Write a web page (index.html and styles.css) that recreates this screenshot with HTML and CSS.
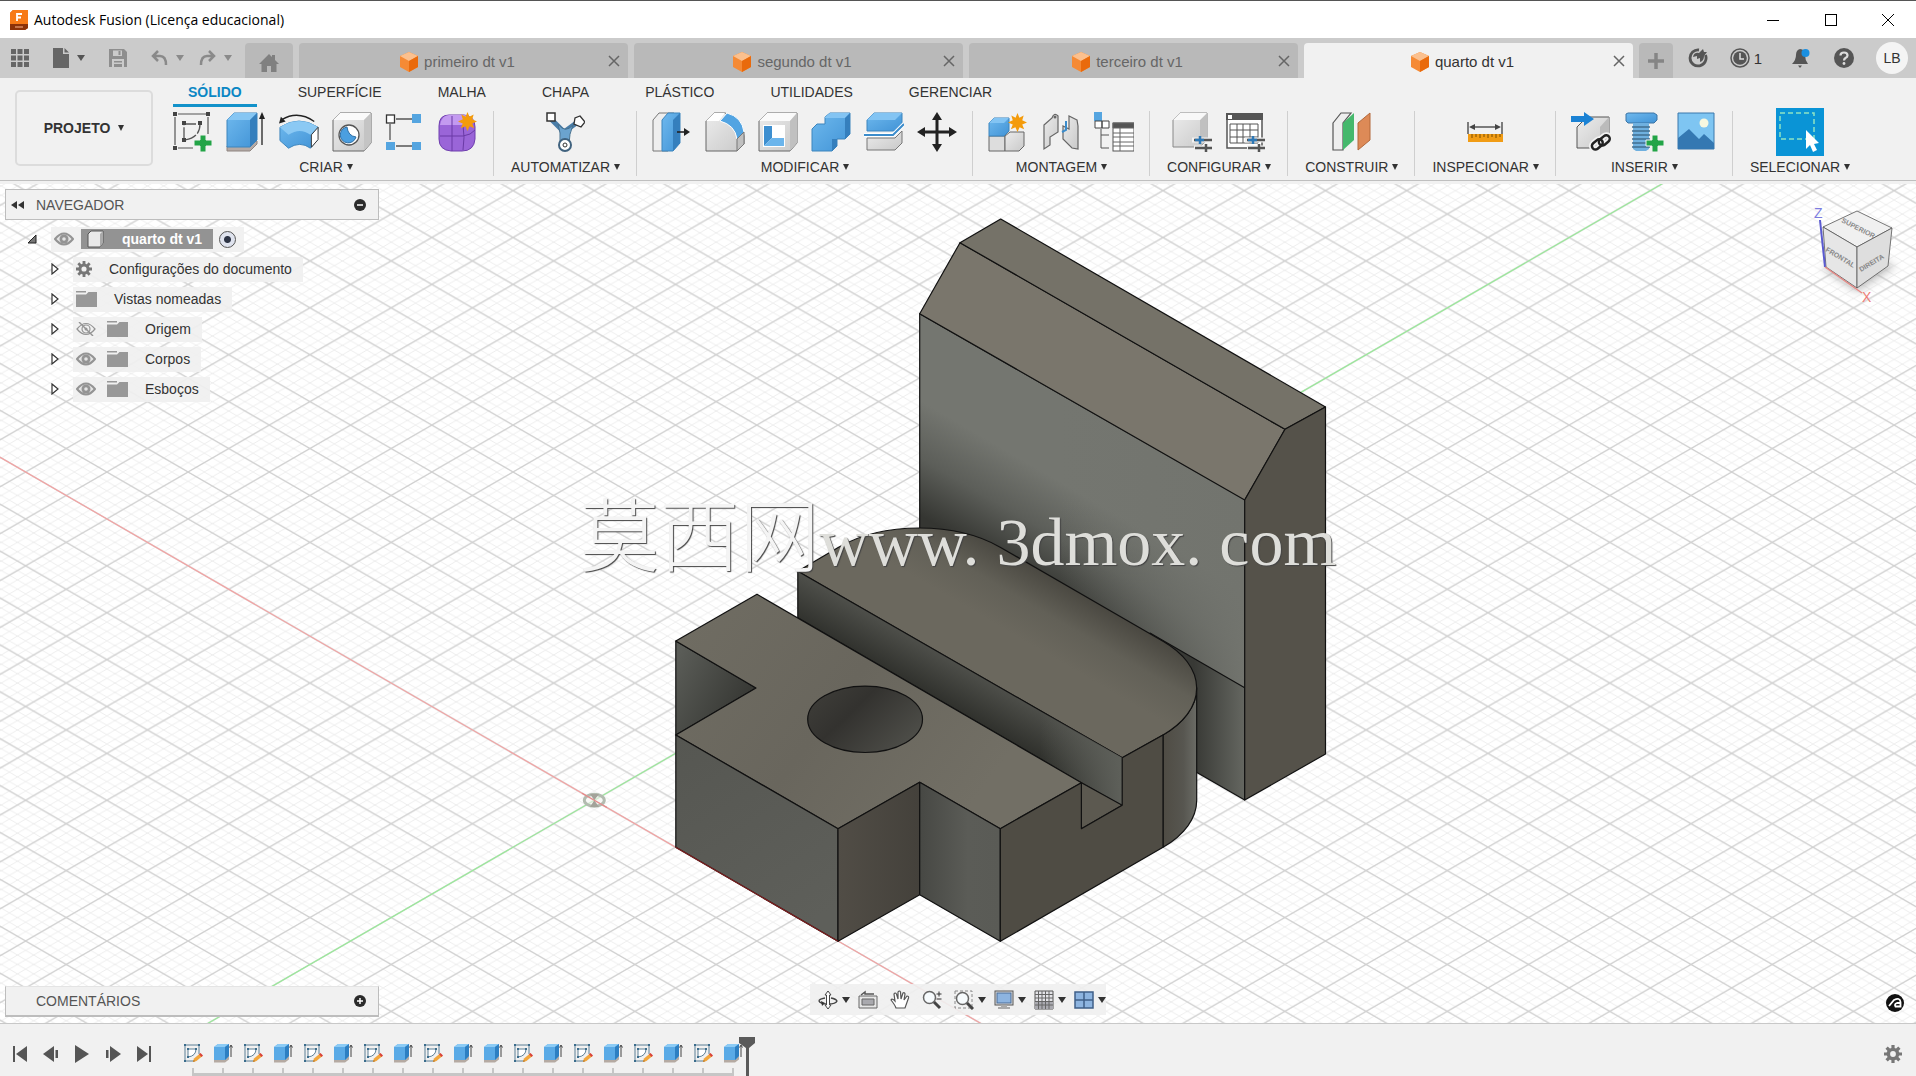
FILE: index.html
```html
<!DOCTYPE html>
<html lang="pt-BR">
<head>
    <meta charset="UTF-8">
    <meta name="viewport" content="width=device-width, initial-scale=1.0">
    <title>Autodesk Fusion (Licença educacional)</title>
    <link rel="stylesheet" href="styles.css">
</head>
<body>

<!-- Shared icons -->
<svg class="defs" width="0" height="0" aria-hidden="true">
    <symbol id="cube" viewBox="0 0 18 20">
        <path d="M9 0L18 4V15L9 20L0 15V4Z" fill="#f58a35"/>
        <path d="M9 0L18 4L9 9L0 4Z" fill="#fbc08e"/>
        <path d="M18 4V15L9 20V9Z" fill="#e96a0c"/>
    </symbol>
    <symbol id="close" viewBox="0 0 12 12">
        <path d="M1 1L11 11M11 1L1 11" stroke="#666" stroke-width="1.5" fill="none"/>
    </symbol>
    <symbol id="eye" viewBox="0 0 20 14">
        <path d="M1 7Q10 -4 19 7Q10 18 1 7Z" fill="#e4e4e4" stroke="#949494" stroke-width="2"/>
        <circle cx="10" cy="7" r="4.5" fill="#949494"/>
        <circle cx="10" cy="7" r="1.8" fill="#e4e4e4"/>
    </symbol>
    <symbol id="eye-off" viewBox="0 0 20 14">
        <path d="M1 7Q10 -4 19 7Q10 18 1 7Z" fill="none" stroke="#949494" stroke-width="1.2"/>
        <circle cx="10" cy="7" r="4" fill="none" stroke="#949494" stroke-width="1.2"/>
        <circle cx="10" cy="7" r="1.5" fill="#949494"/>
        <path d="M3 0L17 14" stroke="#949494" stroke-width="1.4"/>
    </symbol>
    <symbol id="folder" viewBox="0 0 21 16">
        <path d="M0 0H10V1.5H0ZM0 3.5H10L12.5 1H21V16H0Z" fill="#989898"/>
    </symbol>
    <symbol id="gear" viewBox="0 0 18 18">
        <circle cx="9" cy="9" r="4.6" fill="none" stroke="#777" stroke-width="3.4"/>
        <path d="M9 0V3.5M9 14.500V18M0 9H3.500M14.500 9H18M2.600 2.600L5 5M13 13L15.400 15.400M15.400 2.600L13 5M5 13L2.600 15.400" stroke="#777" stroke-width="3.200"/>
    </symbol>
    <symbol id="expand" viewBox="0 0 8 12">
        <path d="M1 1L7 6L1 11Z" fill="#fff" stroke="#333" stroke-width="1.2"/>
    </symbol>
    <symbol id="tl-sketch" viewBox="0 0 20 20">
        <path d="M2 2H16V11M2 2V18H11" fill="none" stroke="#5b7f95" stroke-width="1"/>
        <path d="M5 6H13Q13 13 5 14Z" fill="#fff" stroke="#5b7f95" stroke-width="1"/>
        <path d="M1 1h2v2h-2zM15 1h2v2h-2zM1 17h2v2h-2zM4 5h2v2h-2zM12 5h2v2h-2zM4 13h2v2h-2z" fill="#3a6c8c"/>
        <path d="M10 19L11 15.500L17 10.500L19.500 13L13.500 18Z" fill="#f2a63c"/>
        <path d="M16 11.300L17.500 10L20 12.500L18.500 13.900Z" fill="#d8423a"/>
        <path d="M10 19L10.700 16.700L12.300 18.300Z" fill="#b8792c"/>
    </symbol>
    <symbol id="tl-extrude" viewBox="0 0 20 20">
        <path d="M1 16V19.500H12L16 16.500V13Z" fill="#b5aaa2"/>
        <path d="M1 4L5 1H16V13L12 17H1Z" fill="#5aaae6"/>
        <path d="M1 4L5 1H16L12 4Z" fill="#8ccbf5"/>
        <path d="M12 4L16 1V13L12 17Z" fill="#2d7fc2"/>
        <path d="M18 3V14M16.500 4.500L18 2L19.500 4.500" stroke="#444" fill="none" stroke-width="1"/>
    </symbol>
    <linearGradient id="blue" x1="0" y1="0" x2="1" y2="1">
        <stop offset="0" stop-color="#6fb9ee"/>
        <stop offset="1" stop-color="#4193d6"/>
    </linearGradient>
    <linearGradient id="grey" x1="0" y1="0" x2="1" y2="1">
        <stop offset="0" stop-color="#ececec"/>
        <stop offset="1" stop-color="#c9c9c9"/>
    </linearGradient>
    <symbol id="burst" viewBox="-10 -10 20 20">
        <path d="M0 -10L2 -5L6.500 -7.500L5 -2.500L10 0L5 2.200L7 7L2.200 5L0 10L-2.200 5L-7 7L-5 2.200L-10 0L-5 -2.500L-6.500 -7.500L-2 -5Z" fill="#f49b0b"/>
    </symbol>
</svg>

<header class="titlebar">
    <svg class="app-icon" viewBox="0 0 18 20">
        <path d="M3 0H16L18 2V18L15 20H0V3Z" fill="#c64b09"/>
        <path d="M3 0H18V14H0V3Z" fill="#f77a17"/>
        <path d="M0 14H18V18L15 20H0Z" fill="#8c3208"/>
        <path d="M7 11V4H12M7 7.500H11" stroke="#fff" stroke-width="1.800" fill="none"/>
        <path d="M5 17H13" stroke="#d88a60" stroke-width="1.500"/>
    </svg>
    <span class="title">Autodesk Fusion (Licença educacional)</span>
    <div class="window-buttons">
        <button aria-label="Minimizar"><svg width="14" height="14"><path d="M1 7.500H13" stroke="#000"/></svg></button>
        <button aria-label="Maximizar"><svg width="14" height="14"><rect x="1.500" y="1.500" width="11" height="11" fill="none" stroke="#000"/></svg></button>
        <button aria-label="Fechar"><svg width="14" height="14"><path d="M1 1L13 13M13 1L1 13" stroke="#000"/></svg></button>
    </div>
</header>

<div class="tabbar">
    <div class="quick">
        <button aria-label="Painel de dados"><svg width="18" height="18" fill="#666"><path d="M0 0h5v5h-5zM6.500 0h5v5h-5zM13 0h5v5h-5zM0 6.500h5v5h-5zM6.500 6.500h5v5h-5zM13 6.500h5v5h-5zM0 13h5v5h-5zM6.500 13h5v5h-5zM13 13h5v5h-5z"/></svg></button>
        <button class="q-file" aria-label="Arquivo"><svg width="16" height="20"><path d="M0 0H10V6H16V20H0ZM11.500 0L16 4.500H11.500Z" fill="#666"/></svg><i class="caret"></i></button>
        <button class="q-save" aria-label="Salvar"><svg width="18" height="18"><path d="M0 0H15L18 3V18H0Z" fill="#8e8e8e"/><path d="M4 1.500H13V7H4ZM3 10H15V18H3Z" fill="#cbcbcb"/><path d="M9.500 2H11.500V6H9.500ZM5 12H13V13.500H5ZM5 15H13V18H5Z" fill="#8e8e8e"/></svg></button>
        <button class="q-undo dim" aria-label="Desfazer"><svg width="17" height="16"><path d="M7 1L2 6L7 11M2 6H9Q15 6 15 15" fill="none" stroke="#8a8a8a" stroke-width="2.500"/></svg><i class="caret"></i></button>
        <button class="q-redo dim" aria-label="Refazer"><svg width="17" height="16"><path d="M10 1L15 6L10 11M15 6H8Q2 6 2 15" fill="none" stroke="#8a8a8a" stroke-width="2.500"/></svg><i class="caret"></i></button>
    </div>
    <button class="home-tab" aria-label="Início"><svg width="20" height="18"><path d="M10 0L13 3V1H16V6L20 10H17.500V18H12V12H8V18H2.500V10H0Z" fill="#808080"/></svg></button>
    <div class="doc-tab"><span class="doc-name"><svg width="18" height="20"><use href="#cube"/></svg>primeiro dt v1</span><button aria-label="Fechar"><svg width="12" height="12"><use href="#close"/></svg></button></div>
    <div class="doc-tab"><span class="doc-name"><svg width="18" height="20"><use href="#cube"/></svg>segundo dt v1</span><button aria-label="Fechar"><svg width="12" height="12"><use href="#close"/></svg></button></div>
    <div class="doc-tab"><span class="doc-name"><svg width="18" height="20"><use href="#cube"/></svg>terceiro dt v1</span><button aria-label="Fechar"><svg width="12" height="12"><use href="#close"/></svg></button></div>
    <div class="doc-tab active"><span class="doc-name"><svg width="18" height="20"><use href="#cube"/></svg>quarto dt v1</span><button aria-label="Fechar"><svg width="12" height="12"><use href="#close"/></svg></button></div>
    <button class="new-tab" aria-label="Novo"><svg width="16" height="16"><path d="M8 0V16M0 8H16" stroke="#858585" stroke-width="3.500"/></svg></button>
    <div class="account">
        <button aria-label="Extensões"><svg width="20" height="20"><path d="M11 2A8 8 0 1 0 17.500 7" fill="none" stroke="#555" stroke-width="2.800"/><path d="M5 9Q6 4 11 5L15 1L16 4L19 4L16 8Q16 13 12 14L12 10L9 11L9 8Z" fill="#555"/></svg></button>
        <button class="jobs" aria-label="Status do trabalho"><svg width="20" height="20"><circle cx="10" cy="10" r="9" fill="none" stroke="#555" stroke-width="1.500"/><circle cx="10" cy="10" r="6.800" fill="#555"/><path d="M10 5V11H14" fill="none" stroke="#ddd" stroke-width="1.500"/></svg><span>1</span></button>
        <button class="bell" aria-label="Notificações"><svg width="20" height="20"><path d="M8 1Q13 1 13 7Q13 12 16 16H0Q4 12 4 7Q4 2 8 1ZM6 17.500H10L8 20Z" fill="#555"/><circle cx="13.500" cy="5" r="4" fill="#1a8fe0"/></svg></button>
        <button aria-label="Ajuda"><svg width="20" height="20"><circle cx="10" cy="10" r="10" fill="#555"/><path d="M6.500 7.500Q6.500 4.500 10 4.500Q13.500 4.500 13.500 7.500Q13.500 9 11.500 10Q10 11 10 12.500" fill="none" stroke="#ddd" stroke-width="2.200"/><circle cx="10" cy="15.500" r="1.400" fill="#ddd"/></svg></button>
        <button class="avatar">LB</button>
    </div>
</div>

<div class="ribbon">
    <button class="workspace">PROJETO<i class="caret"></i></button>
    <div class="ribbon-main">
        <nav class="ribbon-tabs">
            <a href="#" class="current">SÓLIDO</a>
            <a href="#">SUPERFÍCIE</a>
            <a href="#">MALHA</a>
            <a href="#">CHAPA</a>
            <a href="#">PLÁSTICO</a>
            <a href="#">UTILIDADES</a>
            <a href="#">GERENCIAR</a>
        </nav>
        <div class="groups">
            <div class="group">
                <div class="tools">
                    <svg viewBox="0 0 40 40"><path d="M5 2H33M35 5V22M2 5V33M5 36H20" fill="none" stroke="#555" stroke-width="1.200"/><path d="M11 12H27Q27 26 11 28Z" fill="none" stroke="#555" stroke-width="1.300" stroke-dasharray="12 2"/><path d="M0 0h4v4h-4zM33 0h4v4h-4zM0 34h4v4h-4zM9 9h4v4h-4zM25 9h4v4h-4zM9 26h4v4h-4z" fill="#444"/><path d="M27 23H33V28H39V34H33V40H27V34H21V28H27Z" fill="#22a447" stroke="#f1f1f1"/></svg>
                    <svg viewBox="0 0 40 40"><path d="M1 34V39H24L31 32V29Z" fill="#b4aaa6" stroke="#8e8480"/><path d="M1 8L8 1H31V28L24 35H1Z" fill="url(#blue)" stroke="#3c85bd"/><path d="M1 8L8 1H31L24 8Z" fill="#86c6f3"/><path d="M24 8L31 1V28L24 35Z" fill="#357fbd"/><path d="M36 5V33" stroke="#222" stroke-width="1.300"/><path d="M36 0L39 7H33Z" fill="#222"/></svg>
                    <svg viewBox="0 0 42 40"><path d="M1 15Q21 2 41 15L40 29L33 37Q22 29 10 37L1 29Z" fill="url(#blue)" stroke="#3c85bd"/><path d="M1 15Q21 2 41 15L33 23Q22 15 10 23Z" fill="#8bc9f4"/><path d="M34 23L41 15V28L34 36Z" fill="#fff" stroke="#333"/><path d="M3 7Q20 -3 37 9" fill="none" stroke="#222" stroke-width="1.400"/><path d="M0 11L2 4L7 9Z" fill="#222"/></svg>
                    <svg viewBox="0 0 40 40"><path d="M1 8L8 1H39V31L32 39H1Z" fill="url(#grey)" stroke="#666"/><path d="M1 8L8 1H39L32 8Z" fill="#fafafa"/><path d="M32 8L39 1V31L32 39Z" fill="#c4c4c4"/><circle cx="17" cy="23" r="10" fill="#fff" stroke="#555" stroke-width="1.300"/><path d="M15 15A8 8 0 1 0 24 25Q16 24 15 15Z" fill="#4b9fe0" stroke="#2f6fa5"/></svg>
                    <svg viewBox="0 0 40 40"><path d="M11 7H27M5 12V28M11 34H27" stroke="#555" stroke-width="1.300"/><rect x="1.500" y="3" width="8" height="8" fill="#fff" stroke="#333" stroke-width="1.300"/><path d="M27 2H36V11H27ZM1 30H10V38H1ZM27 30H36V38H27Z" fill="#55a5e0"/></svg>
                    <svg viewBox="0 0 40 40"><path d="M1 14Q1 3 11 3H26Q37 4 37 15V27Q36 39 24 39H13Q1 38 1 27Z" fill="#9a65d8" stroke="#6f3fae"/><path d="M2 13Q4 3 11 3H26Q34 4 35 8Q27 13 23 13Z" fill="#c39af0"/><path d="M2 24H25Q33 23 37 18M14 4V39M25 13Q27 25 25 38" fill="none" stroke="#6a3aa6"/><use href="#burst" x="20" y="0" width="19" height="19"/></svg>
                </div>
                <button class="group-label">CRIAR<i class="caret"></i></button>
            </div>
            <div class="group">
                <div class="tools">
                    <svg viewBox="0 0 40 40"><path d="M6 7L19 20L34 9M19 19L20 33" fill="none" stroke="#4a7da8" stroke-width="5"/><path d="M13 12Q20 22 28 13Q24 22 24 32H15Q16 20 13 12Z" fill="#6ba3ce" stroke="#47718f"/><rect x="2" y="1" width="8" height="8" fill="#fff" stroke="#333" stroke-width="1.500"/><path d="M35 4L40 10L36 15L29 12L30 6Z" fill="#fff" stroke="#333" stroke-width="1.300"/><circle cx="20" cy="33" r="6" fill="#fff" stroke="#40627e" stroke-width="2"/><circle cx="20" cy="33" r="2" fill="#fff" stroke="#333"/></svg>
                </div>
                <button class="group-label">AUTOMATIZAR<i class="caret"></i></button>
            </div>
            <div class="group">
                <div class="tools">
                    <svg viewBox="0 0 40 40"><path d="M1 8L7 1H22V33L16 39H1Z" fill="#eee" stroke="#777"/><path d="M10 8L16 1H28V31L21 39H10Z" fill="url(#blue)" stroke="#3c85bd"/><path d="M21 8L28 1V31L21 39Z" fill="#357fbd"/><path d="M25 20H34" stroke="#222" stroke-width="1.600"/><path d="M32 16L38 20L32 24Z" fill="#222"/></svg>
                    <svg viewBox="0 0 40 40"><path d="M1 9L9 1H20Q37 4 39 24V32L32 39H1Z" fill="url(#grey)" stroke="#666"/><path d="M1 9L9 1H20L14 9Z" fill="#fff"/><path d="M15 9L22 1Q37 5 39 20L32 27Q30 13 15 9Z" fill="#52a4e2" stroke="#fff"/><path d="M32 27L39 20V32L32 39Z" fill="#c0c0c0" stroke="#777"/></svg>
                    <svg viewBox="0 0 40 40"><path d="M1 9L9 1H39V31L32 39H1Z" fill="url(#grey)" stroke="#666"/><path d="M1 9L9 1H39L32 9Z" fill="#fafafa"/><path d="M32 9L39 1V31L32 39Z" fill="#c0c0c0"/><rect x="5" y="13" width="22" height="22" fill="#fff"/><path d="M6 14H14V26L6 34Z" fill="#3d8fd0"/><path d="M6 34L14 26H26V34Z" fill="#6bb5ec"/></svg>
                    <svg viewBox="0 0 40 40"><path d="M1 17L6 12H14V5L19 1H39V22L34 27H26V34L21 39H1Z" fill="url(#blue)" stroke="#3c85bd"/><path d="M14 5L19 1H39L34 6H14Z" fill="#83c4f3"/><path d="M34 6L39 1V22L34 27ZM21 34V27H26V34L21 39Z" fill="#357fbd"/></svg>
                    <svg viewBox="0 0 40 40"><path d="M3 8L10 1H38V12L31 19H3Z" fill="url(#blue)" stroke="#3c85bd"/><path d="M3 8L10 1H38L31 8Z" fill="#83c4f3"/><path d="M3 26H31L38 19V31L31 38H3Z" fill="url(#grey)" stroke="#777"/><path d="M0 23H29L40 12" fill="none" stroke="#fff" stroke-width="4"/><path d="M0 23H29L40 12" fill="none" stroke="#3b8ccb" stroke-width="2"/></svg>
                    <svg viewBox="0 0 40 40"><path d="M20 5V35M5 20H35" stroke="#222" stroke-width="3"/><path d="M20 0L25 8H15ZM20 40L15 32H25ZM0 20L8 15V25ZM40 20L32 25V15Z" fill="#222"/></svg>
                </div>
                <button class="group-label">MODIFICAR<i class="caret"></i></button>
            </div>
            <div class="group">
                <div class="tools">
                    <svg viewBox="0 0 40 40"><path d="M1 24H17V39H1Z" fill="#ddd" stroke="#666"/><path d="M17 24L22 20H36V34L31 39H17Z" fill="url(#grey)" stroke="#666"/><path d="M1 11L6 6H21V19L16 24H1Z" fill="url(#blue)" stroke="#3c85bd"/><path d="M1 11L6 6H21L16 11Z" fill="#83c4f3"/><use href="#burst" x="20" y="1" width="19" height="19"/></svg>
                    <svg viewBox="0 0 40 40"><path d="M3 13L11 6Q13 0 17 4V20L9 25V33L3 37Z" fill="url(#grey)" stroke="#666" stroke-width="1.200"/><path d="M36 8L28 4V17L22 14V27L31 36L37 37V14Z" fill="url(#grey)" stroke="#666" stroke-width="1.200"/><path d="M25 9V18L21 20" fill="none" stroke="#3b8ccb" stroke-width="2"/><circle cx="14" cy="5" r="1.500" fill="#666"/></svg>
                    <svg viewBox="0 0 40 40"><path d="M0 0H8V9H0Z" fill="#55a5e0"/><path d="M1 9H8V16H1ZM8 9H15V16H8Z" fill="#fff" stroke="#444"/><path d="M7 17V36M7 23H15M7 36H15" stroke="#555"/><rect x="19" y="11" width="21" height="28" fill="#fff" stroke="#555"/><path d="M19 11H40V16H19ZM26 16V39" fill="#555" stroke="#666"/><path d="M19 21H40M19 25H40M19 30H40M19 34H40" stroke="#666"/></svg>
                </div>
                <button class="group-label">MONTAGEM<i class="caret"></i></button>
            </div>
            <div class="group">
                <div class="tools">
                    <svg viewBox="0 0 40 40"><path d="M1 8L8 1H35V28L28 35H1Z" fill="url(#grey)" stroke="#888"/><path d="M28 8L35 1V28L28 35Z" fill="#c0c0c0"/><path d="M1 8L8 1H35L28 8Z" fill="#f8f8f8"/><path d="M20 28H40M22 36H40" stroke="#f1f1f1" stroke-width="5"/><path d="M22 28H40M23 36H40M34 32V40" stroke="#555" stroke-width="2.500"/><path d="M28 24V32M23 28H32" stroke="#2e78b5" stroke-width="2.500"/></svg>
                    <svg viewBox="0 0 40 40"><rect x="2" y="2" width="35" height="34" fill="#fff" stroke="#555" stroke-width="1.500"/><path d="M1 1H38V8H1Z" fill="#555"/><rect x="3" y="3" width="4" height="4" fill="#fff"/><path d="M5 12H33V31H5ZM5 18H33M5 25H33M12 12V31M18 12V31M25 12V31" fill="none" stroke="#555"/><path d="M20 28H40M22 36H40" stroke="#f1f1f1" stroke-width="5"/><path d="M22 28H40M23 36H40M34 32V40" stroke="#555" stroke-width="2.500"/><path d="M28 24V32M23 28H32" stroke="#2e78b5" stroke-width="2.500"/></svg>
                </div>
                <button class="group-label">CONFIGURAR<i class="caret"></i></button>
            </div>
            <div class="group">
                <div class="tools">
                    <svg viewBox="0 0 40 40"><path d="M2 11L10 1H20L12 11V38H2Z" fill="#eee" stroke="#555" stroke-width="1.200"/><path d="M12 11L23 1V28L12 38Z" fill="#45b86c"/><path d="M27 11L39 1V28L27 38Z" fill="#dd8a57" stroke="#b3683b"/></svg>
                </div>
                <button class="group-label">CONSTRUIR<i class="caret"></i></button>
            </div>
            <div class="group">
                <div class="tools">
                    <svg viewBox="0 0 40 40"><path d="M3 10V22M37 10V22M6 15H34" stroke="#555" stroke-width="1.500"/><path d="M4 15L10 12V18ZM36 15L30 12V18Z" fill="#444"/><path d="M3 22H38V30H3Z" fill="#f19c15"/><path d="M7 22V26M11 22V25M15 22V26M19 22V25M23 22V26M27 22V25M31 22V26M35 22V25" stroke="#7a4c00"/></svg>
                </div>
                <button class="group-label">INSPECIONAR<i class="caret"></i></button>
            </div>
            <div class="group">
                <div class="tools">
                    <svg viewBox="0 0 40 40"><path d="M6 15L16 5H38V27L29 36H6Z" fill="url(#grey)" stroke="#555"/><path d="M29 15L38 5V27L29 36Z" fill="#bbb"/><path d="M0 4H13V0L23 7L13 14V10H0Z" fill="#1b82d4"/><g fill="none" stroke="#f1f1f1" stroke-width="6"><rect x="20" y="29" width="12" height="7" rx="3.500" transform="rotate(-40 26 32)"/><rect x="27" y="25" width="12" height="7" rx="3.500" transform="rotate(-40 33 28)"/></g><g fill="none" stroke="#222" stroke-width="2.500"><rect x="20" y="29" width="12" height="7" rx="3.500" transform="rotate(-40 26 32)"/><rect x="27" y="25" width="12" height="7" rx="3.500" transform="rotate(-40 33 28)"/></g></svg>
                    <svg viewBox="0 0 40 40"><path d="M2 2L4 1H30L33 3V8L30 11H4L2 9Z" fill="url(#blue)" stroke="#3c74a5"/><path d="M9 11H25V37L22 39H12L9 37Z" fill="#6fb0df"/><path d="M8 15H26M8 19H26M8 23H26M8 27H26M8 31H26M8 35H26" stroke="#426d90" stroke-width="1.300"/><path d="M28 23H34V28H40V34H34V40H28V34H22V28H28Z" fill="#22a447" stroke="#f1f1f1"/></svg>
                    <svg viewBox="0 0 40 40"><path d="M1 1H37V37H1Z" fill="#7ec5f2" stroke="#3b79ac"/><path d="M1 26L12 17L22 27L27 22L37 31V37H1Z" fill="#3478b2"/><circle cx="27" cy="11" r="4.500" fill="#f7f8e0"/></svg>
                </div>
                <button class="group-label">INSERIR<i class="caret"></i></button>
            </div>
            <div class="group">
                <div class="tools">
                    <svg class="select-tool" viewBox="0 0 48 48"><rect width="48" height="48" fill="#0a94d6"/><rect x="4" y="5" width="34" height="26" fill="none" stroke="#8fe3c4" stroke-width="1.500" stroke-dasharray="5 3"/><path d="M30 22V41L34 37L37 44L41 42L38 36L43 35Z" fill="#fff"/></svg>
                </div>
                <button class="group-label">SELECIONAR<i class="caret"></i></button>
            </div>
        </div>
    </div>
</div>

<main class="viewport">
    <svg class="scene" viewBox="0 184 1916 839" preserveAspectRatio="xMidYMid slice">
        <defs>
            <pattern id="minor" x="594.3" y="800.3" width="16.248" height="9.38" patternUnits="userSpaceOnUse">
                <path d="M0 0L16.248 9.38M0 9.38L16.248 0" stroke="#ececec" stroke-width=".9"/>
            </pattern>
            <pattern id="major" x="594.3" y="800.3" width="81.24" height="46.9" patternUnits="userSpaceOnUse">
                <path d="M0 0L81.24 46.9M0 46.9L81.24 0" stroke="#d0d0d0" stroke-width="1.2"/>
            </pattern>
            <linearGradient id="wall" gradientUnits="userSpaceOnUse" x1="990" y1="556" x2="1040" y2="470">
                <stop offset="0" stop-color="#353632"/>
                <stop offset=".5" stop-color="#5c5e59"/>
                <stop offset="1" stop-color="#747670"/>
            </linearGradient>
            <linearGradient id="wall-low" gradientUnits="userSpaceOnUse" x1="1194" y1="0" x2="1245" y2="0">
                <stop offset="0" stop-color="#383935"/>
                <stop offset="1" stop-color="#656761"/>
            </linearGradient>
            <linearGradient id="wall-light" gradientUnits="userSpaceOnUse" x1="1060" y1="0" x2="1245" y2="0">
                <stop offset="0" stop-color="#72746e" stop-opacity="0"/>
                <stop offset="1" stop-color="#72746e"/>
            </linearGradient>
            <linearGradient id="slab" gradientUnits="userSpaceOnUse" x1="1045" y1="653" x2="1080" y2="593">
                <stop offset="0" stop-color="#6b685e"/>
                <stop offset=".5" stop-color="#626057"/>
                <stop offset="1" stop-color="#4a4841"/>
            </linearGradient>
            <linearGradient id="slot" gradientUnits="userSpaceOnUse" x1="970" y1="670" x2="945" y2="714">
                <stop offset="0" stop-color="#4e4f4a"/>
                <stop offset="1" stop-color="#292a26"/>
            </linearGradient>
            <linearGradient id="slot-end" gradientUnits="userSpaceOnUse" x1="1040" y1="0" x2="1122" y2="0">
                <stop offset="0" stop-color="#5e605a" stop-opacity="0"/>
                <stop offset="1" stop-color="#5e605a"/>
            </linearGradient>
            <linearGradient id="notch" gradientUnits="userSpaceOnUse" x1="676" y1="660" x2="750" y2="700">
                <stop offset="0" stop-color="#5a5c57"/>
                <stop offset="1" stop-color="#363733"/>
            </linearGradient>
            <linearGradient id="top" gradientUnits="userSpaceOnUse" x1="690" y1="620" x2="960" y2="820">
                <stop offset="0" stop-color="#6f6c62"/>
                <stop offset=".5" stop-color="#69665d"/>
                <stop offset="1" stop-color="#726f65"/>
            </linearGradient>
            <linearGradient id="front" gradientUnits="userSpaceOnUse" x1="676" y1="740" x2="800" y2="930">
                <stop offset="0" stop-color="#565752"/>
                <stop offset="1" stop-color="#5e5f5a"/>
            </linearGradient>
            <linearGradient id="side" gradientUnits="userSpaceOnUse" x1="838" y1="0" x2="920" y2="0">
                <stop offset="0" stop-color="#514d46"/>
                <stop offset="1" stop-color="#44413b"/>
            </linearGradient>
            <linearGradient id="front2" gradientUnits="userSpaceOnUse" x1="920" y1="0" x2="1000" y2="0">
                <stop offset="0" stop-color="#474844"/>
                <stop offset=".6" stop-color="#5b5c57"/>
                <stop offset="1" stop-color="#5a5b56"/>
            </linearGradient>
            <linearGradient id="round" gradientUnits="userSpaceOnUse" x1="1163" y1="0" x2="1197" y2="0">
                <stop offset="0" stop-color="#4f4c44"/>
                <stop offset=".6" stop-color="#575650"/>
                <stop offset="1" stop-color="#6b6c66"/>
            </linearGradient>
            <linearGradient id="hole" x1="0" y1="0" x2="1" y2=".6">
                <stop offset="0" stop-color="#5a5952"/>
                <stop offset=".15" stop-color="#3c3b37"/>
                <stop offset=".45" stop-color="#33322f"/>
                <stop offset="1" stop-color="#4c4c47"/>
            </linearGradient>
        </defs>

        <rect x="-2000" y="-1000" width="6000" height="3000" fill="#fff"/>
        <rect x="-2000" y="-1000" width="6000" height="3000" fill="url(#minor)"/>
        <rect x="-2000" y="-1000" width="6000" height="3000" fill="url(#major)"/>
        <path d="M-205.700 338.500L1394.300 1262.100" stroke="#f2a3a3" stroke-width="1.200"/>
        <path d="M-205.700 1262.100L1994.300 -7.900" stroke="#9be89b" stroke-width="1.200"/>

        <ellipse cx="594.300" cy="800.300" rx="10" ry="6" fill="#f4f4f0" fill-opacity=".6" stroke="#b3bbb0" stroke-width="3"/>
        <path d="M594.300 800.300L590 794H599ZM594.300 800.300L590 807H599Z" fill="#a3a39a"/>
        <path d="M582 793.200L607 807.600" stroke="#e58a8a" stroke-width="1.200"/>

        <g stroke="#111" stroke-width="1.200" stroke-linejoin="round">
            <!-- back wall -->
            <path d="M919.700 313.700L1244.700 500V688L919.700 528Z" fill="url(#wall)"/>
            <path d="M1060 394L1244.700 500V688L1060 582Z" fill="url(#wall-light)" stroke="none"/>
            <path d="M1150 633L1244.700 687.700V800L1150 745.500Z" fill="url(#wall-low)"/>
            <path d="M960 242.700L1285 429.300L1244.700 500L919.700 313.700Z" fill="#7a766c"/>
            <path d="M1000.700 219L1325.500 407L1285 429.300L960 242.700Z" fill="#757268"/>
            <path d="M1325.500 407V754L1244.700 800V500L1285 429.300Z" fill="#55524a"/>
            <!-- rounded slab -->
            <path d="M1163 735A114.900 66.300 0 0 0 1196.700 688V800.500A114.900 66.300 0 0 1 1163 847.300Z" fill="url(#round)"/>
            <path d="M797.800 571.300L838.200 547.400A114.900 66.300 0 0 1 1000.600 547.400L1163 641.200A114.900 66.300 0 0 1 1163 735L1122.200 757.700Z" fill="url(#slab)"/>
            <path d="M797.800 571.300L1122.200 757.700V805.300L1081.400 782.700L797.800 617.700Z" fill="url(#slot)"/>
            <path d="M1040 710.500L1122.200 757.700V805.300L1040 758.500Z" fill="url(#slot-end)" stroke="none"/>
            <path d="M1081.400 782.700L1122.200 805.300L1081.400 828.700Z" fill="#5c5950"/>
            <!-- front block -->
            <path d="M675.800 641L756 688L675.800 735Z" fill="url(#notch)"/>
            <path d="M675.800 641L757 594.300L1081.400 782.700L1000.300 828.700L919.700 782.300L838 828.700L675.800 735L756 688Z" fill="url(#top)"/>
            <path d="M675.800 735L838 828.700V941.300L675.800 847.300Z" fill="url(#front)"/>
            <path d="M838 828.700L919.700 782.300V894.700L838 941.300Z" fill="url(#side)"/>
            <path d="M919.700 782.300L1000.300 828.700V941.300L919.700 894.700Z" fill="url(#front2)"/>
            <path d="M1000.300 828.700L1081.400 782.700V828.700L1122.200 805.300V757.700L1163 735V847.300L1000.300 941.300Z" fill="#4f4c44"/>
            <ellipse cx="865.100" cy="719.300" rx="57.400" ry="33.200" fill="url(#hole)"/>
        </g>
        <path d="M675.800 847.300L838 941.300" stroke="#7c1f1f" stroke-width="1.200"/>
    </svg>

    <div class="watermark"><span class="wm-cjk">莫西网</span>www. 3dmox. com</div>

    <svg class="viewcube" viewBox="1806 200 100 110" width="100" height="110">
        <defs>
            <filter id="soft" x="-50%" y="-50%" width="200%" height="200%"><feGaussianBlur stdDeviation="4"/></filter>
        </defs>
        <path d="M1822 268L1857 250L1896 266L1857 292Z" fill="#999" opacity=".6" filter="url(#soft)"/>
        <g stroke="#555" stroke-width=".8" stroke-linejoin="round">
            <path d="M1857 211L1892 228L1857 247L1823 227Z" fill="#f0f0f0"/>
            <path d="M1823 227L1857 247V288L1826 267Z" fill="#e6e6e6"/>
            <path d="M1857 247L1892 228L1888 266L1857 288Z" fill="#dedede"/>
        </g>
        <path d="M1820 220L1825 267" stroke="#5a5ad0" stroke-width="2"/>
        <path d="M1825 267L1862 293" stroke="#e88a86" stroke-width="1.500"/>
        <text class="cube-face" transform="translate(1841 222) rotate(27)">SUPERIOR</text>
        <text class="cube-face" transform="translate(1825 251) rotate(31)">FRONTAL</text>
        <text class="cube-face" transform="translate(1861 272) rotate(-31)">DIREITA</text>
        <text class="cube-axis axis-z" x="1814" y="218">Z</text>
        <text class="cube-axis axis-x" x="1862" y="302">X</text>
    </svg>

    <section class="panel browser">
        <div class="panel-head">
            <svg width="13" height="8"><path d="M6 0V8L0 4ZM13 0V8L7 4Z" fill="#333"/></svg>
            <span>NAVEGADOR</span>
            <button aria-label="Recolher"><svg width="12" height="12"><circle cx="6" cy="6" r="6" fill="#2b2b2b"/><path d="M3 6H9" stroke="#fff" stroke-width="1.500"/></svg></button>
        </div>
        <ul class="tree">
            <li class="root">
                <svg width="10" height="10"><path d="M9 1V9H1Z" fill="#777" stroke="#222"/></svg>
                <div class="node">
                    <svg width="20" height="14"><use href="#eye"/></svg>
                    <span class="root-name"><svg width="18" height="18"><path d="M1 4L4 1H16V13L13 17H1Z" fill="#e9e9e9" stroke="#555"/><path d="M13 4L16 1V13L13 17Z" fill="#aaa"/></svg><b>quarto dt v1</b></span>
                    <input type="radio" name="activate" aria-label="Ativar componente" checked>
                </div>
            </li>
            <li><svg width="8" height="12"><use href="#expand"/></svg><div class="node"><svg width="16" height="16"><use href="#gear"/></svg><span>Configurações do documento</span></div></li>
            <li><svg width="8" height="12"><use href="#expand"/></svg><div class="node"><svg width="21" height="16"><use href="#folder"/></svg><span>Vistas nomeadas</span></div></li>
            <li><svg width="8" height="12"><use href="#expand"/></svg><div class="node"><svg width="20" height="14"><use href="#eye-off"/></svg><svg width="21" height="16"><use href="#folder"/></svg><span>Origem</span></div></li>
            <li><svg width="8" height="12"><use href="#expand"/></svg><div class="node"><svg width="20" height="14"><use href="#eye"/></svg><svg width="21" height="16"><use href="#folder"/></svg><span>Corpos</span></div></li>
            <li><svg width="8" height="12"><use href="#expand"/></svg><div class="node"><svg width="20" height="14"><use href="#eye"/></svg><svg width="21" height="16"><use href="#folder"/></svg><span>Esboços</span></div></li>
        </ul>
    </section>

    <section class="panel comments">
        <div class="panel-head">
            <span>COMENTÁRIOS</span>
            <button aria-label="Expandir"><svg width="12" height="12"><circle cx="6" cy="6" r="6" fill="#2b2b2b"/><path d="M3 6H9M6 3V9" stroke="#fff" stroke-width="1.500"/></svg></button>
        </div>
    </section>

    <div class="navbar">
        <button class="drop" aria-label="Órbita"><svg width="20" height="20"><path d="M7 8Q1 9 1 11Q2 14 10 14Q18 14 19 11Q18 9 13 8" fill="none" stroke="#444" stroke-width="1.300"/><path d="M10 1L13 5H11.500V15H13L10 19L7 15H8.500V5H7Z" fill="#fff" stroke="#444"/><path d="M3 11L7 13L4 16Z" fill="#333"/></svg><i class="caret"></i></button>
        <button aria-label="Olhar para"><svg width="20" height="20"><path d="M1 6H19V18H1Z" fill="#e6e6e6" stroke="#666"/><path d="M4 9H16V15H4Z" fill="#a9a9ae" stroke="#666"/><path d="M3 5L7 2V4H16" fill="none" stroke="#555" stroke-width="1.500"/></svg></button>
        <button aria-label="Pan"><svg width="20" height="20"><path d="M6 18Q5 15 1 10Q2 8 5 11L4 4Q5 2 6.500 4L8 9L8 2Q9.500 0 10.500 2L11 9L13 3Q14.500 2 15 4L14 10L17 6Q19 6 18.500 8L15 18Z" fill="#fff" stroke="#555" stroke-width="1.200"/></svg></button>
        <button aria-label="Zoom"><svg width="20" height="20"><circle cx="7.500" cy="7.500" r="6" fill="#f7fbfd" stroke="#666" stroke-width="1.500"/><path d="M12 12L18 18" stroke="#444" stroke-width="3"/><path d="M14.500 4H19.500M17 1.500V6.500M14.500 9H19.500" stroke="#333"/></svg></button>
        <button class="drop" aria-label="Janela de zoom"><svg width="20" height="20"><rect x="1" y="1" width="17" height="17" fill="none" stroke="#888" stroke-dasharray="3 2"/><circle cx="8.500" cy="8.500" r="6" fill="#f7fbfd" stroke="#666" stroke-width="1.500"/><path d="M13 13L19 19" stroke="#444" stroke-width="3"/></svg><i class="caret"></i></button>
        <button class="drop" aria-label="Exibição"><svg width="20" height="20"><rect x="1" y="1" width="18" height="14" fill="#ddd" stroke="#555"/><rect x="3" y="3" width="14" height="10" fill="#8db4e0" stroke="#4a6d98"/><path d="M7 15H13V17H16V19H4V17H7Z" fill="#aaa"/></svg><i class="caret"></i></button>
        <button class="drop" aria-label="Grade"><svg width="20" height="20"><path d="M1 1H19V19H1Z" fill="#e4e4e8" stroke="#555"/><path d="M1 11H19V19H1Z" fill="#aaaab0"/><path d="M1 4.500H19M1 8H19M1 11.500H19M1 15H19M4.500 1V19M8 1V19M11.500 1V19M15 1V19" stroke="#666"/></svg><i class="caret"></i></button>
        <button class="drop" aria-label="Viewports"><svg width="20" height="18"><path d="M1 1H19V17H1Z" fill="#8db4e0" stroke="#3f5f88" stroke-width="1.500"/><path d="M10 1V17M1 9H19" stroke="#3f5f88" stroke-width="1.500"/></svg><i class="caret"></i></button>
    </div>

    <button class="assistant" aria-label="Assistente"><svg width="18" height="18"><circle cx="9" cy="9" r="9" fill="#111"/><path d="M3 12L8 6Q14 3 14.500 8V12.500H9.500Q8 10 11 9H14" fill="none" stroke="#fff" stroke-width="1.800"/></svg></button>
</main>

<footer class="timeline">
    <div class="playback">
        <button aria-label="Início"><svg width="16" height="16"><path d="M1 0H3V16H1ZM15 0V16L4 8Z" fill="#555"/></svg></button>
        <button aria-label="Voltar"><svg width="16" height="16"><path d="M11 0V16L0 8ZM12.500 4H15V12H12.500Z" fill="#555"/></svg></button>
        <button aria-label="Reproduzir"><svg width="16" height="18"><path d="M1 0L15 9L1 18Z" fill="#555"/></svg></button>
        <button aria-label="Avançar"><svg width="16" height="16"><path d="M5 0L16 8L5 16ZM1 4H3.500V12H1Z" fill="#555"/></svg></button>
        <button aria-label="Fim"><svg width="16" height="16"><path d="M1 0L12 8L1 16ZM13 0H15V16H13Z" fill="#555"/></svg></button>
    </div>
    <ol class="features">
        <li><svg><use href="#tl-sketch"/></svg></li>
        <li><svg><use href="#tl-extrude"/></svg></li>
        <li><svg><use href="#tl-sketch"/></svg></li>
        <li><svg><use href="#tl-extrude"/></svg></li>
        <li><svg><use href="#tl-sketch"/></svg></li>
        <li><svg><use href="#tl-extrude"/></svg></li>
        <li><svg><use href="#tl-sketch"/></svg></li>
        <li><svg><use href="#tl-extrude"/></svg></li>
        <li><svg><use href="#tl-sketch"/></svg></li>
        <li><svg><use href="#tl-extrude"/></svg></li>
        <li><svg><use href="#tl-extrude"/></svg></li>
        <li><svg><use href="#tl-sketch"/></svg></li>
        <li><svg><use href="#tl-extrude"/></svg></li>
        <li><svg><use href="#tl-sketch"/></svg></li>
        <li><svg><use href="#tl-extrude"/></svg></li>
        <li><svg><use href="#tl-sketch"/></svg></li>
        <li><svg><use href="#tl-extrude"/></svg></li>
        <li><svg><use href="#tl-sketch"/></svg></li>
        <li><svg><use href="#tl-extrude"/></svg></li>
    </ol>
    <svg class="marker" width="16" height="40"><path d="M0 0H16V6L10 11V40H7V11L0 6Z" fill="#5a5a5a"/></svg>
    <button class="settings" aria-label="Configurações"><svg width="18" height="18"><use href="#gear"/></svg></button>
</footer>

</body>
</html>
```
FILE: styles.css
```css
* {
    box-sizing: border-box;
}
body {
    margin: 0;
    height: 100vh;
    display: flex;
    flex-direction: column;
    overflow: hidden;
    font-family: "Liberation Sans", Arial, sans-serif;
    font-size: 14px;
    color: #333;
    background: #f1f1f1;
}
button {
    font: inherit;
    color: inherit;
    background: none;
    border: none;
    padding: 0;
    display: flex;
    align-items: center;
    justify-content: center;
    cursor: pointer;
}
svg {
    display: block;
    flex: none;
}
.defs {
    position: absolute;
}
.caret {
    border: 3px solid transparent;
    border-top: 6px solid #333;
    border-bottom: 0;
}

/* Title bar */
.titlebar {
    height: 38px;
    flex: none;
    display: flex;
    align-items: center;
    padding-left: 10px;
    background: #fff;
    border-top: 1px solid #555;
}
.app-icon {
    width: 18px;
    height: 20px;
}
.title {
    margin-left: 6px;
    font-family: "Open Sans", "Noto Sans", sans-serif;
    font-size: 14px;
    color: #000;
}
.window-buttons {
    display: flex;
    margin-left: auto;
}
.window-buttons button {
    width: 58px;
    height: 36px;
}
.window-buttons button:last-child {
    width: 56px;
}

/* Document tabs */
.tabbar {
    height: 40px;
    flex: none;
    display: flex;
    align-items: flex-end;
    background: #cbcbcb;
}
.quick {
    width: 245px;
    height: 40px;
    display: flex;
    align-items: center;
    padding-left: 11px;
}
.quick .caret {
    margin-left: 8px;
    border-width: 6px 4px 0;
    border-top-color: #555;
}
.quick .dim .caret {
    border-top-color: #8a8a8a;
}
.q-file, .q-save, .q-undo {
    margin-left: 24px;
}
.q-redo {
    margin-left: 15px;
}
.home-tab, .new-tab, .doc-tab {
    height: 35px;
    background: #b9b9b9;
    border-radius: 4px 4px 0 0;
}
.home-tab {
    width: 48px;
    margin-right: 6px;
    padding-top: 4px;
}
.doc-tab {
    flex: 1;
    max-width: 329px;
    margin-right: 6px;
    padding: 0 8px;
    display: flex;
    align-items: center;
    font-size: 15px;
    color: #666;
}
.doc-tab.active {
    background: #f1f1f1;
    color: #333;
}
.doc-name {
    flex: 1;
    display: flex;
    align-items: center;
    justify-content: center;
    gap: 6px;
    padding-top: 2px;
}
.new-tab {
    width: 34px;
}
.account {
    height: 40px;
    margin-left: auto;
    padding-right: 8px;
    display: flex;
    align-items: center;
    gap: 22px;
}
.jobs {
    gap: 4px;
    font-size: 15px;
}
.bell {
    margin-left: 8px;
}
.avatar {
    width: 32px;
    height: 32px;
    border-radius: 50%;
    background: #f4f4f4;
}

/* Ribbon */
.ribbon {
    height: 106px;
    flex: none;
    display: flex;
    padding-left: 15px;
    box-shadow: inset 0 -3px 0 #f1f1f1, inset 0 -4px 0 #bfbfbf;
}
.workspace {
    width: 138px;
    height: 76px;
    margin: 12px 5px 0 0;
    gap: 8px;
    border: 2px solid #dcdcdc;
    border-radius: 5px;
    font-weight: bold;
}
.ribbon-tabs {
    display: flex;
    gap: 26px;
    height: 29px;
    padding-left: 15px;
}
.ribbon-tabs a {
    padding: 6px 15px 0;
    line-height: 16px;
    color: #333;
    text-decoration: none;
}
.ribbon-tabs .current {
    font-weight: bold;
    color: #0b87c4;
    border-bottom: 3px solid #1292ca;
}
.groups {
    display: flex;
}
.group {
    display: flex;
    flex-direction: column;
    align-items: center;
    height: 65px;
    margin-top: 4px;
    padding: 0 15px;
}
.group + .group {
    border-left: 1px solid #cfcfcf;
}
.tools {
    display: flex;
    align-items: center;
    gap: 13px;
    height: 42px;
}
.tools svg {
    width: 40px;
    height: 40px;
}
.tools .select-tool {
    width: 48px;
    height: 48px;
}
.group-label {
    gap: 4px;
    margin-top: 5px;
    padding: 0 1px 0 2px;
    line-height: 18px;
}

/* Canvas */
.viewport {
    flex: 1;
    position: relative;
    overflow: hidden;
    min-height: 0;
}
.scene {
    width: 100%;
    height: 100%;
}
.watermark {
    position: absolute;
    left: 0;
    right: 0;
    top: 306px;
    text-align: center;
    white-space: pre;
    font-family: "Liberation Serif", "Noto Sans CJK SC", serif;
    font-size: 68px;
    line-height: 80px;
    color: #dededa;
    text-shadow: 1px 1px 1px #444;
    pointer-events: none;
}
.wm-cjk {
    font-family: "Noto Sans CJK SC", serif;
    font-weight: 300;
    font-size: 80px;
    color: #f4f4f4;
}
.viewcube {
    position: absolute;
    top: 16px;
    right: 10px;
}
.cube-face {
    font-size: 7px;
    font-weight: bold;
    fill: #888;
}
.cube-axis {
    font-size: 14px;
}
.axis-z {
    fill: #7c7ce0;
}
.axis-x {
    fill: #ee7d78;
}

/* Floating panels */
.panel {
    position: absolute;
    left: 5px;
    width: 374px;
}
.browser {
    top: 5px;
}
.comments {
    bottom: 6px;
}
.panel-head {
    height: 31px;
    display: flex;
    align-items: center;
    padding: 0 12px 0 5px;
    background: #f1f1f1;
    border: 1px solid #bdbdbd;
    color: #555;
}
.panel-head span {
    margin-left: 12px;
}
.panel-head button {
    margin-left: auto;
}
.comments .panel-head {
    padding-left: 18px;
    border-bottom-width: 2px;
    border-top-color: #e4e4e4;
}
.tree {
    list-style: none;
    margin: 4px 0 0;
    padding: 0;
}
.tree li {
    display: flex;
    align-items: center;
    height: 30px;
    padding-left: 46px;
}
.tree .root {
    padding-left: 22px;
}
.node {
    display: flex;
    align-items: center;
    height: 25px;
    margin-left: 14px;
    padding: 0 11px 0 3px;
    background: rgba(240, 240, 240, 0.9);
}
.node svg + svg {
    margin-left: 11px;
}
.node span {
    margin-left: 17px;
}
.root .node {
    padding: 0 8px 0 3px;
}
.root .root-name {
    display: flex;
    align-items: center;
    height: 20px;
    margin: 0 6px 0 7px;
    padding: 0 11px 0 6px;
    gap: 17px;
    background: #939393;
    color: #fff;
}
.node input {
    appearance: none;
    width: 17px;
    height: 17px;
    margin: 0;
    border: 1px solid #555;
    border-radius: 50%;
    background: radial-gradient(#2d3445 0 3px, #dfe3ee 4px);
}

/* View controls */
.navbar {
    position: absolute;
    left: 50%;
    bottom: 8px;
    height: 31px;
    transform: translateX(-50%);
    display: flex;
    align-items: center;
    gap: 12px;
    padding: 0 4px 0 8px;
    background: rgba(240, 240, 240, 0.9);
}
.navbar .caret {
    border-width: 6px 4px 0;
}
.navbar .drop {
    gap: 4px;
    margin-right: -4px;
}
.assistant {
    position: absolute;
    right: 12px;
    bottom: 11px;
}

/* Timeline */
.timeline {
    height: 53px;
    flex: none;
    display: flex;
    align-items: flex-start;
    border-top: 1px solid #c8c8c8;
}
.playback {
    display: flex;
    align-items: center;
    gap: 15px;
    height: 60px;
    padding-left: 12px;
}
.features {
    list-style: none;
    display: flex;
    margin: 19px 0 0 26px;
    padding: 0;
}
.features li {
    width: 30px;
    height: 33px;
    display: flex;
    justify-content: center;
    background:
        linear-gradient(#c6c6c6, #c6c6c6) 50% 25px / 2px 8px no-repeat,
        linear-gradient(#c6c6c6, #c6c6c6) 0 30px / 100% 3px no-repeat;
}
.features li:first-child {
    background:
        linear-gradient(#c6c6c6, #c6c6c6) 50% 25px / 2px 8px no-repeat,
        linear-gradient(#c6c6c6, #c6c6c6) 100% 30px / 50% 3px no-repeat;
}
.features li:last-child {
    background:
        linear-gradient(#c6c6c6, #c6c6c6) 50% 25px / 2px 8px no-repeat,
        linear-gradient(#c6c6c6, #c6c6c6) 0 30px / 50% 3px no-repeat;
}
.features svg {
    width: 20px;
    height: 20px;
}
.marker {
    margin: 13px 0 0 -9px;
}
.settings {
    height: 60px;
    margin-left: auto;
    padding-right: 14px;
}
```
